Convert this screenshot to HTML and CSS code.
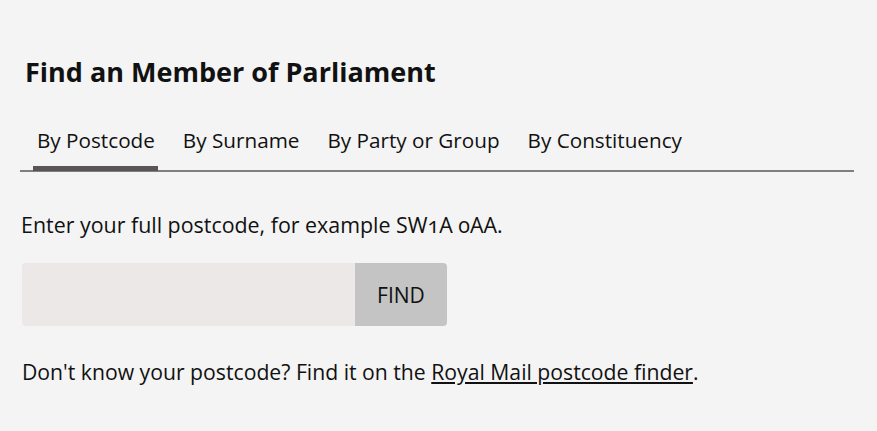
FILE: index.html
```html
<!DOCTYPE html>
<html lang="en">
<head>
<meta charset="utf-8">
<title>Find an Member of Parliament</title>
<link rel="stylesheet" href="styles.css">
</head>
<body>
<main class="finder">
  <h2 class="finder-title">Find an Member of Parliament</h2>
  <nav class="tabs">
    <a class="tab tab-active" href="#">By Postcode</a>
    <a class="tab" href="#">By Surname</a>
    <a class="tab" href="#">By Party or Group</a>
    <a class="tab" href="#">By Constituency</a>
  </nav>
  <p class="hint">Enter your full postcode, for example SW1A 0AA.</p>
  <form class="search">
    <input class="search-input" type="text" aria-label="Postcode">
    <button class="search-btn" type="button">FIND</button>
  </form>
  <p class="help">Don't know your postcode? Find it on the <a href="#">Royal Mail postcode finder</a>.</p>
</main>
</body>
</html>
```
FILE: styles.css
```css
html, body {
  margin: 0;
  padding: 0;
  background: #f4f4f4;
}
body {
  font-family: "Open Sans", "Liberation Sans", sans-serif;
  color: #111;
}
.finder {
  padding: 54px 23px 0 20px;
}
.finder-title {
  margin: 0 0 0 5px;
  font-size: 27px;
  font-weight: 700;
  line-height: 36px;
}
.tabs {
  display: flex;
  margin-top: 38px;
  border-bottom: 2px solid #7f7f7f;
  padding-left: 13px;
}
.tab {
  display: block;
  color: #111;
  text-decoration: none;
  font-size: 20.7px;
  line-height: 24px;
  padding: 0 3px 14px 4px;
  margin-right: 21px;
  border-bottom: 5px solid transparent;
  margin-bottom: -1px;
}
.tab-active {
  border-bottom-color: #5a5555;
}
.hint {
  margin: 39px 0 0 1px;
  font-size: 21.4px;
  line-height: 28px;
  font-variant-numeric: oldstyle-nums;
}
.search {
  display: flex;
  width: 425px;
  height: 63px;
  margin: 24px 0 0 2px;
  border-radius: 4px;
  overflow: hidden;
}
.search-input {
  flex: 1;
  border: 0;
  background: #ebe8e7;
  margin: 0;
  padding: 0 12px;
  font: inherit;
}
.search-btn {
  width: 92px;
  border: 0;
  margin: 0;
  background: #c4c4c4;
  font-family: inherit;
  font-size: 21px;
  color: #111;
}
.help {
  margin: 32px 0 0 2px;
  font-size: 21.2px;
  line-height: 28px;
}
.help a {
  color: #111;
}
```
